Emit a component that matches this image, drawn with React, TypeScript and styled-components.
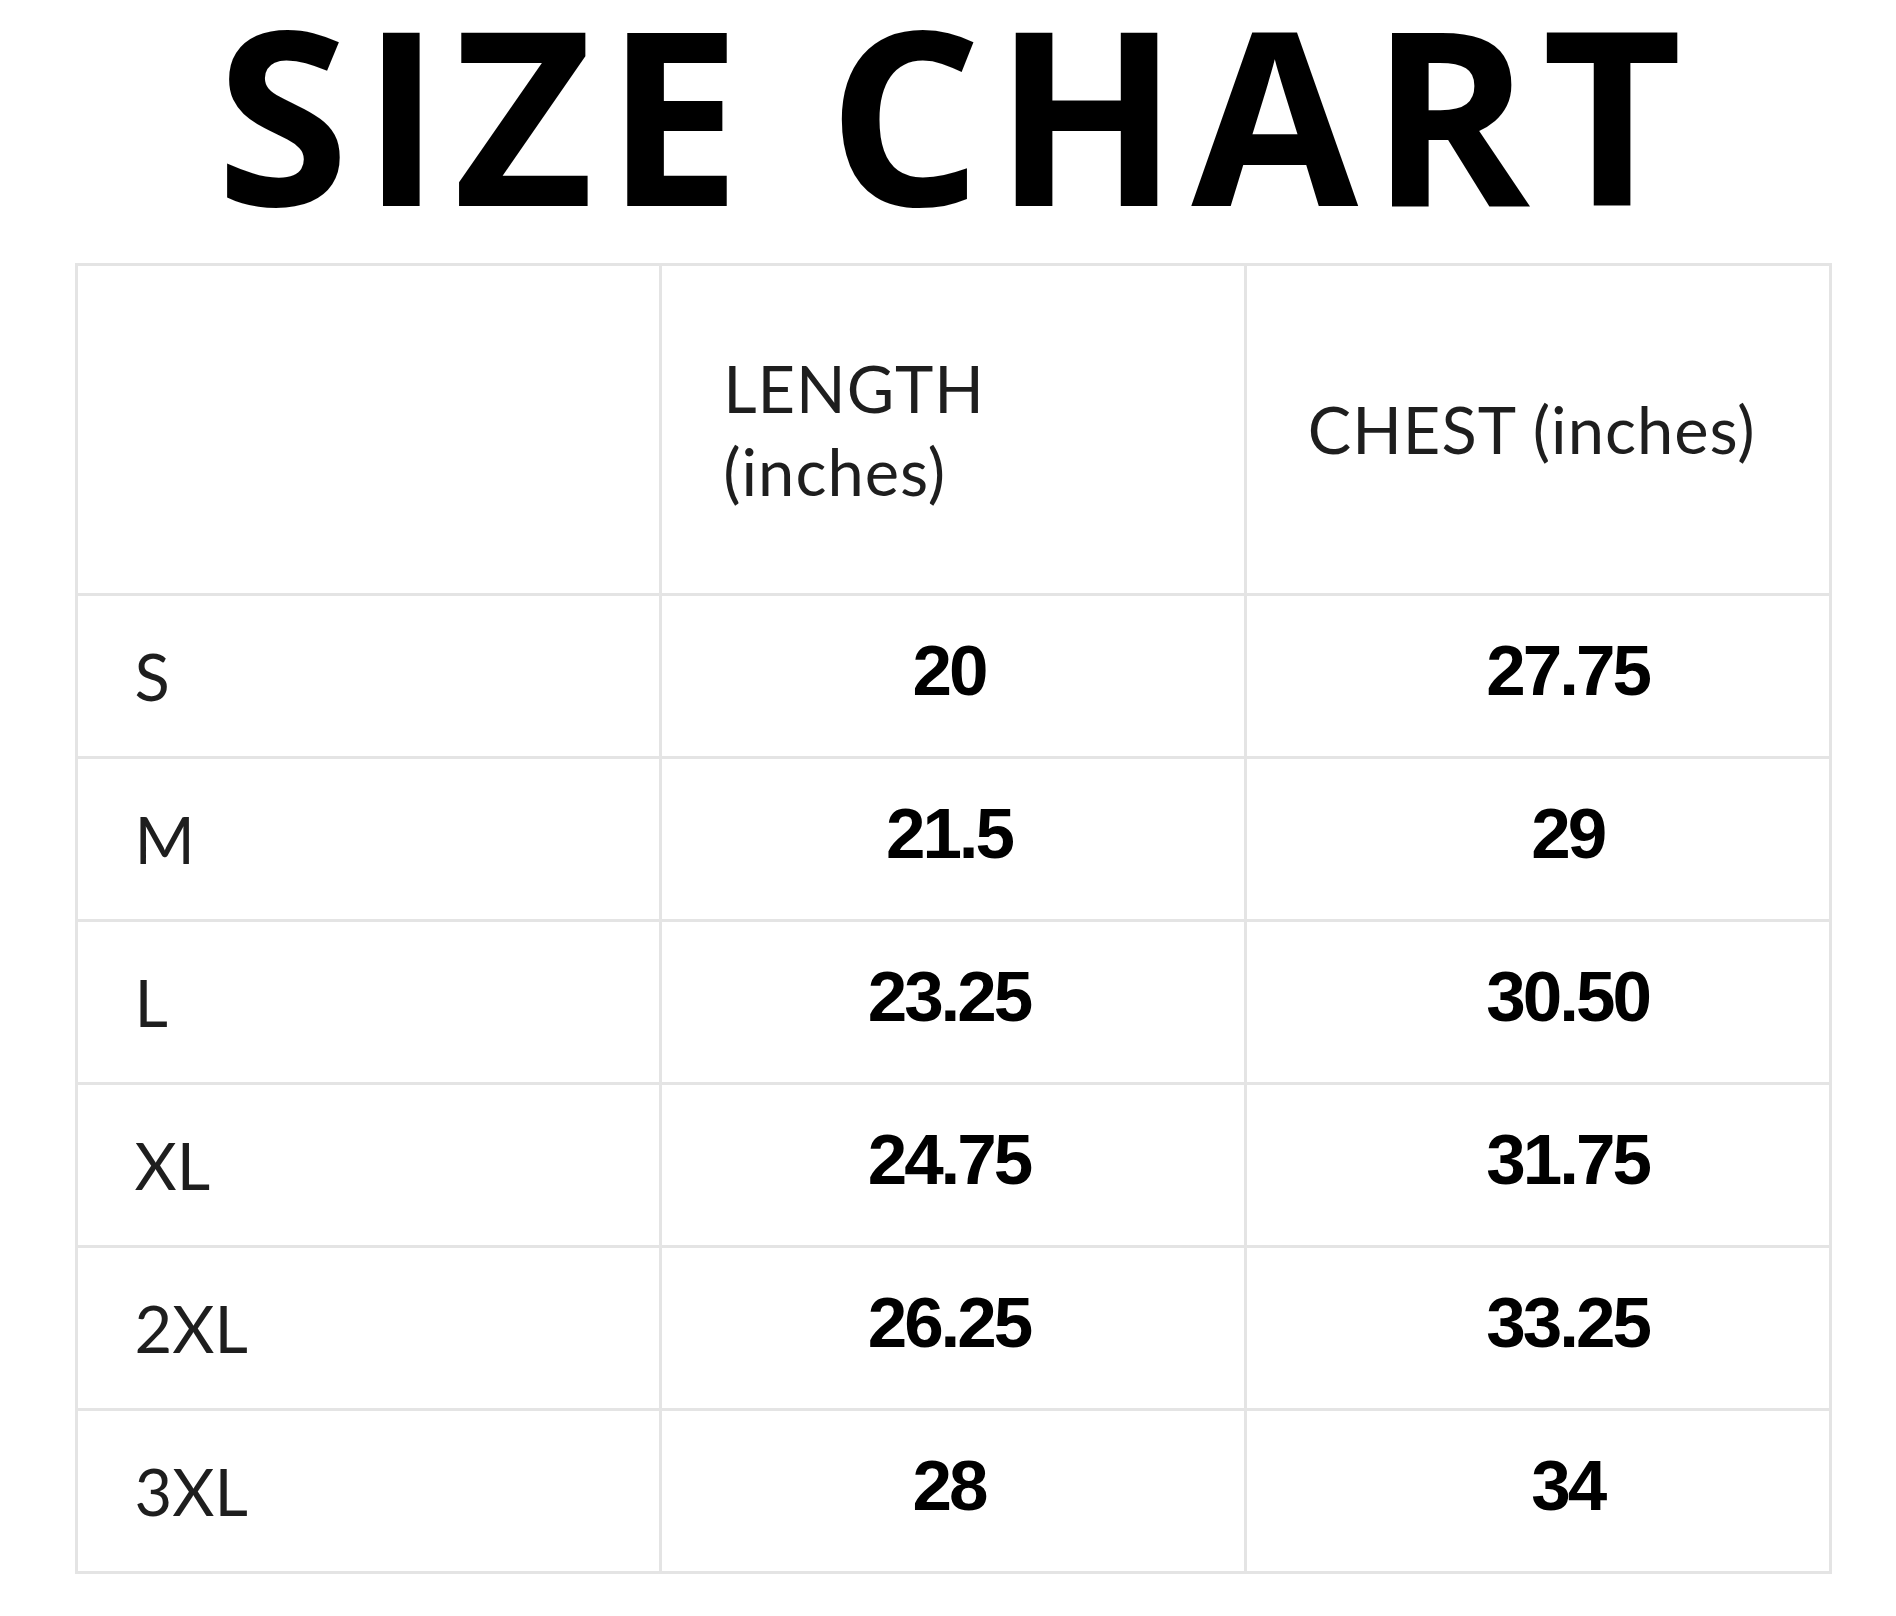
import styled, { createGlobalStyle } from "styled-components";

const GlobalStyle = createGlobalStyle`
  html, body {
    margin: 0;
    padding: 0;
    background: #fff;
  }
`;

const Page = styled.main`
  width: 1896px;
  min-height: 1616px;
  box-sizing: border-box;
  padding-left: 10px;
  background: #fff;
  display: flex;
  flex-direction: column;
  align-items: center;
`;

const Title = styled.h1`
  margin: -9px 0 0;
  padding-left: 4px;
  font-family: "Open Sans", "Liberation Sans", sans-serif;
  font-weight: 700;
  font-size: 242px;
  line-height: 1;
  letter-spacing: 12px;
  color: #000;
  text-align: center;
  white-space: nowrap;
`;

const Chart = styled.table`
  margin-top: 30px;
  width: 1757px;
  border-collapse: collapse;
  table-layout: fixed;
`;

const Row = styled.tr<{ $head?: boolean }>`
  height: ${(p) => (p.$head ? "330px" : "163px")};
`;

const HeadCell = styled.th`
  border: 3px solid #e4e4e4;
  padding: 0 0 0 61px;
  text-align: left;
  vertical-align: middle;
  font-family: Lato, "Noto Sans", sans-serif;
  font-weight: 400;
  font-size: 65px;
  line-height: 83px;
  letter-spacing: 1px;
  color: #1e1e1e;
`;

const SizeCell = styled.td`
  border: 3px solid #e4e4e4;
  padding: 0 0 0 57px;
  font-family: Lato, "Noto Sans", sans-serif;
  font-weight: 400;
  font-size: 65px;
  color: #1e1e1e;
`;

const ValueCell = styled.td<{ $shift: number }>`
  border: 3px solid #e4e4e4;
  padding: 0 ${(p) => (p.$shift < 0 ? -p.$shift : 0)}px 12px
    ${(p) => (p.$shift > 0 ? p.$shift : 0)}px;
  text-align: center;
  font-family: "Liberation Sans", Arial, sans-serif;
  font-weight: 700;
  font-size: 71px;
  letter-spacing: -3px;
  color: #000;
`;

const rows = [
  { size: "S", length: "20", chest: "27.75" },
  { size: "M", length: "21.5", chest: "29" },
  { size: "L", length: "23.25", chest: "30.50" },
  { size: "XL", length: "24.75", chest: "31.75" },
  { size: "2XL", length: "26.25", chest: "33.25" },
  { size: "3XL", length: "28", chest: "34" },
];

const App = () => {
  return (
    <Page>
      <GlobalStyle />
      <Title>SIZE CHART</Title>
      <Chart>
        <thead>
          <Row $head>
            <HeadCell />
            <HeadCell>
              LENGTH
              <br />
              (inches)
            </HeadCell>
            <HeadCell>CHEST (inches)</HeadCell>
          </Row>
        </thead>
        <tbody>
          {rows.map((r) => (
            <Row key={r.size}>
              <SizeCell>{r.size}</SizeCell>
              <ValueCell $shift={-8}>{r.length}</ValueCell>
              <ValueCell $shift={60}>{r.chest}</ValueCell>
            </Row>
          ))}
        </tbody>
      </Chart>
    </Page>
  );
};

export default App;
